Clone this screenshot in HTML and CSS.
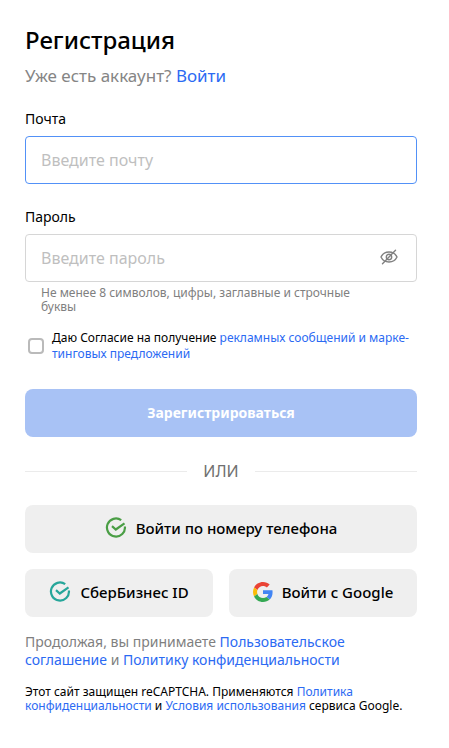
FILE: index.html
```html
<!DOCTYPE html>
<html lang="ru">
<head>
    <meta charset="UTF-8">
    <meta name="viewport" content="width=device-width, initial-scale=1.0">
    <title>Регистрация</title>
    <link rel="stylesheet" href="styles.css">
</head>
<body>

    <main class="container">
        <h1>Регистрация</h1>
        <p class="login">Уже есть аккаунт? <a href="#">Войти</a></p>

        <form>
            <label class="label" for="email">Почта</label>
            <input class="field active" type="email" id="email" placeholder="Введите почту">

            <label class="label" for="password">Пароль</label>
            <div class="password">
                <input class="field" type="password" id="password" placeholder="Введите пароль">
                <button class="toggle" type="button" aria-label="Показать пароль">
                    <svg width="18" height="16" viewBox="0 0 18 16" fill="none" stroke="#808080" stroke-width="1.4" stroke-linecap="round">
                        <path d="M1 8C2.500 4.800 5.400 3 9 3s6.500 1.800 8 5c-1.500 3.200-4.400 5-8 5S2.500 11.200 1 8z"/>
                        <circle cx="9" cy="8" r="2.700"/>
                        <path d="M2.500 14.700L15.500 1.300"/>
                    </svg>
                </button>
            </div>
            <p class="hint">Не менее 8 символов, цифры, заглавные и строчные буквы</p>

            <div class="agree">
                <input type="checkbox" id="agree">
                <label for="agree">Даю Согласие на получение <a href="#">рекламных сообщений и марке&shy;тинговых предложений</a></label>
            </div>

            <button class="submit" type="submit">Зарегистрироваться</button>
        </form>

        <div class="divider">или</div>

        <div class="social">
            <button class="wide" type="button">
                <svg width="22" height="22" viewBox="0 0 22 22" fill="none" stroke="#4a9e45" stroke-width="2.200">
                    <path d="M16.200 3.200A9 9 0 1 0 19.900 9.500"/>
                    <path d="M7 9.200l3.800 3.300 8.700-6.200"/>
                </svg>
                Войти по номеру телефона
            </button>
            <button type="button">
                <svg width="22" height="22" viewBox="0 0 22 22" fill="none" stroke="#26a69a" stroke-width="2.200">
                    <path d="M16.200 3.200A9 9 0 1 0 19.900 9.500"/>
                    <path d="M7 9.200l3.800 3.300 8.700-6.200"/>
                </svg>
                СберБизнес ID
            </button>
            <button type="button">
                <svg width="20" height="20" viewBox="0 0 48 48">
                    <path fill="#ea4335" d="M24 9.500c3.540 0 6.710 1.220 9.210 3.600l6.850-6.850C35.900 2.380 30.470 0 24 0 14.620 0 6.510 5.380 2.560 13.220l7.980 6.190C12.430 13.720 17.740 9.500 24 9.500z"/>
                    <path fill="#4285f4" d="M46.980 24.550c0-1.570-.15-3.090-.38-4.550H24v9.020h12.940c-.58 2.960-2.260 5.480-4.780 7.180l7.730 6c4.510-4.180 7.090-10.360 7.090-17.650z"/>
                    <path fill="#fbbc05" d="M10.530 28.590c-.48-1.450-.76-2.990-.76-4.590s.27-3.140.76-4.590l-7.980-6.190C.92 16.460 0 20.120 0 24s.92 7.540 2.560 10.780l7.970-6.190z"/>
                    <path fill="#34a853" d="M24 48c6.480 0 11.930-2.130 15.890-5.810l-7.730-6c-2.150 1.450-4.920 2.300-8.160 2.300-6.260 0-11.570-4.220-13.470-9.910l-7.980 6.190C6.510 42.620 14.620 48 24 48z"/>
                </svg>
                Войти с Google
            </button>
        </div>

        <p class="terms">Продолжая, вы принимаете <a href="#">Пользовательское соглашение</a> и <a href="#">Политику конфиденциальности</a></p>
        <p class="captcha">Этот сайт защищен reCAPTCHA. Применяются <a href="#">Политика конфиденциальности</a> и <a href="#">Условия использования</a> сервиса Google.</p>
    </main>

</body>
</html>
```
FILE: styles.css
```css
* {
    box-sizing: border-box;
}
body {
    margin: 0;
    background: #fff;
    color: #000;
    font-family: "Noto Sans", "Open Sans", sans-serif;
}
.container {
    max-width: 480px;
    padding: 24px 32px 32px 25px;
}
h1 {
    margin: 0;
    font-size: 24px;
    font-weight: 500;
    line-height: 32px;
}
p {
    margin: 0;
}
a {
    color: #2b6af3;
    text-decoration: none;
}
.login {
    margin: 8px 0 23px;
    color: #858585;
    font-size: 17px;
    line-height: 24px;
}
.label {
    display: block;
    margin-bottom: 9px;
    font-size: 14px;
    line-height: 16px;
}
.field {
    display: block;
    width: 100%;
    height: 48px;
    padding: 0 15px;
    border: 1px solid #d6d6d6;
    border-radius: 4px;
    outline: none;
    font-family: inherit;
    font-size: 16px;
}
.field.active {
    margin-bottom: 25px;
    border-color: #5291f7;
}
.field::placeholder {
    color: #bfbfbf;
}
.password {
    position: relative;
}
.password .field {
    padding-right: 56px;
}
.toggle {
    position: absolute;
    top: 0;
    right: 0;
    display: flex;
    align-items: center;
    justify-content: center;
    width: 56px;
    height: 46px;
    padding: 0;
    border: none;
    background: none;
    cursor: pointer;
}
.hint {
    padding: 4px 40px 0 16px;
    color: #808080;
    font-size: 12px;
    line-height: 14px;
}
.agree {
    display: flex;
    align-items: center;
    gap: 8px;
    margin: 16px 0 27px;
    padding-left: 3px;
    font-size: 12px;
    line-height: 16px;
}
.agree input {
    flex: none;
    appearance: none;
    width: 16px;
    height: 16px;
    margin: 0;
    border: 2px solid #bababa;
    border-radius: 4px;
}
.agree input:checked {
    background: #2b6af3;
    border-color: #2b6af3;
}
.submit {
    width: 100%;
    height: 48px;
    padding: 0 0 2px;
    border: none;
    border-radius: 8px;
    background: #a8c2f5;
    color: #fff;
    font-family: inherit;
    font-size: 14px;
    font-weight: 700;
    cursor: pointer;
}
.divider {
    display: flex;
    align-items: center;
    gap: 16px;
    margin: 22px 0;
    color: #707070;
    font-size: 16px;
    line-height: 24px;
    text-transform: uppercase;
}
.divider::before,
.divider::after {
    content: "";
    flex: 1;
    height: 1px;
    background: #ebebeb;
}
.social {
    display: grid;
    grid-template-columns: 1fr 1fr;
    gap: 16px;
}
.social button {
    display: flex;
    align-items: center;
    justify-content: center;
    gap: 9px;
    height: 48px;
    padding: 0 0 2px;
    border: none;
    border-radius: 8px;
    background: #efefef;
    color: #000;
    font-family: inherit;
    font-size: 15px;
    font-weight: 500;
    cursor: pointer;
}
.social .wide {
    grid-column: 1 / -1;
}
.terms {
    margin: 16px 0;
    color: #7f7f7f;
    font-size: 14px;
    line-height: 18px;
}
.captcha {
    font-size: 12px;
    line-height: 14px;
}
```
